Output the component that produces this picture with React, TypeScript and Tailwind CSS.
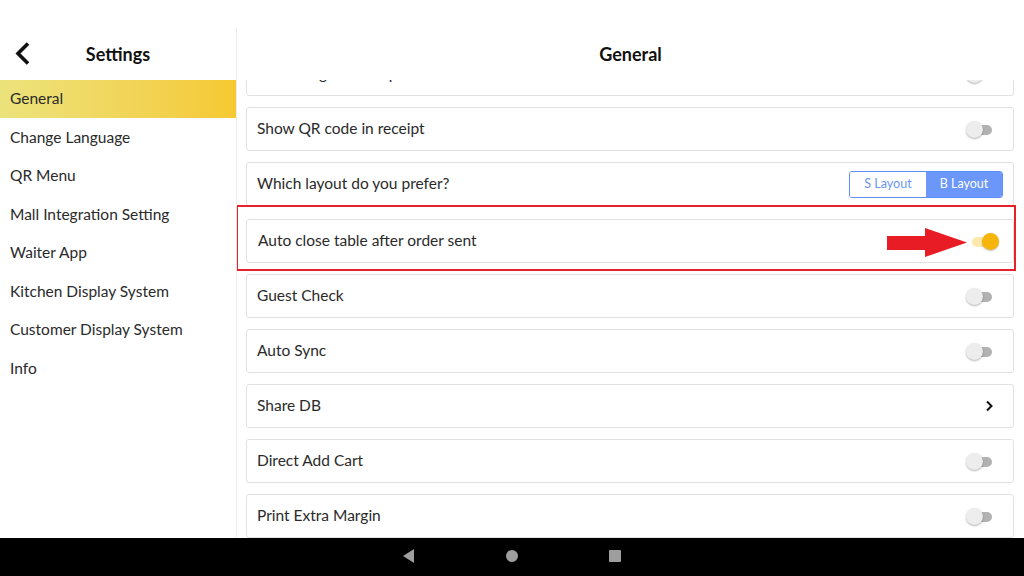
import React from 'react';

const menu = [
  'General',
  'Change Language',
  'QR Menu',
  'Mall Integration Setting',
  'Waiter App',
  'Kitchen Display System',
  'Customer Display System',
  'Info',
];

type Row = {
  label: string;
  kind: 'toggle' | 'on' | 'layout' | 'link';
};

const rows: Row[] = [
  { label: 'Enable logo in receipt', kind: 'toggle' },
  { label: 'Show QR code in receipt', kind: 'toggle' },
  { label: 'Which layout do you prefer?', kind: 'layout' },
  { label: 'Auto close table after order sent', kind: 'on' },
  { label: 'Guest Check', kind: 'toggle' },
  { label: 'Auto Sync', kind: 'toggle' },
  { label: 'Share DB', kind: 'link' },
  { label: 'Direct Add Cart', kind: 'toggle' },
  { label: 'Print Extra Margin', kind: 'toggle' },
];

const Switch = ({ on }: { on?: boolean }) => (
  <div className="relative w-[34px] h-[17px] shrink-0">
    {on ? (
      <>
        <div className="absolute left-[7px] top-[4px] w-[24px] h-[10px] rounded-full bg-[#fde9ab]" />
        <div className="absolute right-0 top-0 w-[17px] h-[17px] rounded-full bg-[#f5b50a] shadow-[0_1px_2px_rgba(0,0,0,0.25)]" />
      </>
    ) : (
      <>
        <div className="absolute left-[2px] top-[4px] w-[25px] h-[10px] rounded-full bg-[#b2b2b2]" />
        <div className="absolute left-[1px] top-0 w-[17px] h-[17px] rounded-full bg-[#ededed] shadow-[0_1px_2px_rgba(0,0,0,0.3)]" />
      </>
    )}
  </div>
);

const LayoutPicker = () => (
  <div className="flex h-[27px] mr-[-4px] rounded-[3px] border border-[#5e8ef7] text-[12.5px] overflow-hidden">
    <div className="w-[76px] flex items-center justify-center bg-white text-[#6a95f5]">
      S Layout
    </div>
    <div className="w-[76px] flex items-center justify-center bg-[#6b97fa] text-white">
      B Layout
    </div>
  </div>
);

const Card = ({ row }: { row: Row }) => (
  <div className="relative h-[44px] flex items-center justify-between pl-[10px] pr-[14px] border border-[#e2e2e2] rounded-[3px] bg-white">
    <span className={row.kind === 'on' ? 'pl-[1px]' : ''}>{row.label}</span>
    {row.kind === 'toggle' && <Switch />}
    {row.kind === 'on' && <Switch on />}
    {row.kind === 'layout' && <LayoutPicker />}
    {row.kind === 'link' && (
      <svg width="10" height="12" viewBox="0 0 10 12" className="mr-[5px]">
        <polyline points="3,1.5 7.5,6 3,10.5" fill="none" stroke="#111" strokeWidth="2" />
      </svg>
    )}
    {row.kind === 'on' && (
      <>
        <div className="absolute left-[-11px] top-[-15px] right-[-3px] bottom-[-9px] border-2 border-[#e8202a] pointer-events-none" />
        <svg
          width="80"
          height="30"
          viewBox="0 0 80 30"
          className="absolute left-[640px] top-[8px]"
        >
          <polygon points="0,8 38,8 38,0 80,14.5 38,29 38,22 0,22" fill="#e81c24" />
        </svg>
      </>
    )}
  </div>
);

export default function App() {
  return (
    <div className="w-[1024px] h-[576px] flex flex-col bg-white text-[15.5px] text-[#2a2a2a] font-['Lato','Open_Sans',sans-serif] overflow-hidden">
      <div className="h-[28px] shrink-0" />
      <div className="flex flex-1 min-h-0">
        <aside className="w-[237px] shrink-0 border-r border-[#ececec] flex flex-col">
          <div className="relative h-[52px] flex items-center justify-center">
            <svg
              width="18"
              height="26"
              viewBox="0 0 18 26"
              className="absolute left-[14px] top-[13px]"
            >
              <polyline
                points="14,2.5 4,12.5 14,22.5"
                fill="none"
                stroke="#111"
                strokeWidth="3.6"
              />
            </svg>
            <span className="text-[18px] font-bold text-[#111]">Settings</span>
          </div>
          <ul className="text-[15.5px]">
            {menu.map((m, i) => (
              <li
                key={m}
                className={
                  i === 0
                    ? 'h-[38px] flex items-center pl-[10px] bg-gradient-to-r from-[#ece37c] to-[#f5c930]'
                    : 'h-[38.5px] flex items-center pl-[10px]'
                }
              >
                {m}
              </li>
            ))}
          </ul>
        </aside>
        <main className="flex-1 flex flex-col min-w-0">
          <div className="h-[52px] shrink-0 flex items-center justify-center text-[18px] font-bold text-[#111]">
            General
          </div>
          <div className="flex-1 overflow-hidden pl-[9px] pr-[10px]">
            <div className="mt-[-28px] flex flex-col gap-[11px]">
              {rows.map((r, i) => (
                <div key={r.label} className={i === 3 ? 'mt-[2px]' : ''}>
                  <Card row={r} />
                </div>
              ))}
            </div>
          </div>
        </main>
      </div>
      <nav className="h-[38px] shrink-0 bg-black flex items-center justify-center">
        <svg width="1024" height="38" viewBox="0 0 1024 38">
          <polygon points="414,11 414,25 403,18" fill="#9e9e9e" />
          <circle cx="512" cy="18" r="6" fill="#9e9e9e" />
          <rect x="609" y="12" width="12" height="12" rx="1" fill="#9e9e9e" />
        </svg>
      </nav>
    </div>
  );
}
